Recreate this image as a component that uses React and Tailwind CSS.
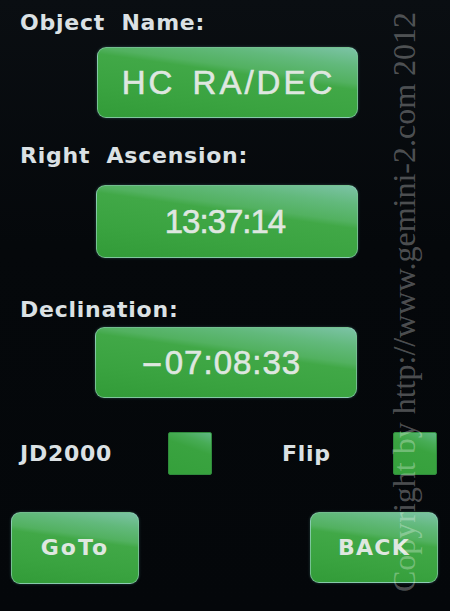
import React from "react";

const btnBg =
  "bg-[linear-gradient(188deg,#7cc3a6_0%,#62b97c_18%,#52b160_34%,#41a847_40%,#3aa340_70%,#329b38_100%)]";

function GreenButton({ className = "", textClass = "", children }) {
  return (
    <div
      className={`flex items-center justify-center rounded-[9px] border-[1.5px] border-[#9dd3c6]/60 ${btnBg} shadow-[0_0_3px_rgba(120,200,190,0.3)] ${className}`}
    >
      <span className={`text-[#dfe7e0] leading-none whitespace-nowrap ${textClass}`}>{children}</span>
    </div>
  );
}

function Check({ className = "" }) {
  return (
    <div
      className={`w-[44px] h-[43px] rounded-[2px] border border-[#2f8a3c] bg-[linear-gradient(200deg,#5fb884_0%,#47ac55_22%,#3aa340_40%,#35a03b_100%)] ${className}`}
    />
  );
}

const label =
  "font-['DejaVu_Sans',Verdana,sans-serif] font-bold text-[22px] leading-[22px] tracking-[0.75px] [word-spacing:8px] text-[#dbe1e4]";

const valueText = "text-[33px] [-webkit-text-stroke:0.6px_#dfe7e0]";

export default function App() {
  return (
    <div className="relative w-[450px] h-[611px] overflow-hidden bg-[linear-gradient(180deg,#0a0e12_0%,#05080b_40%,#04070a_100%)] font-['Liberation_Sans',Arial,sans-serif]">
      <div className="flex flex-col">
        <div className={`mt-[12px] ml-[20px] ${label}`}>Object Name:</div>
        <GreenButton
          className="mt-[13px] ml-[97px] w-[261px] h-[71px]"
          textClass={`${valueText} tracking-[3px] [word-spacing:5px] pl-[2px]`}
        >
          HC RA/DEC
        </GreenButton>

        <div className={`mt-[27px] ml-[20px] ${label}`}>Right Ascension:</div>
        <GreenButton
          className="mt-[18px] ml-[96px] w-[262px] h-[73px]"
          textClass={`${valueText} tracking-[-1px] pr-[4px]`}
        >
          13:37:14
        </GreenButton>

        <div className={`mt-[41px] ml-[20px] ${label}`}>Declination:</div>
        <GreenButton
          className="mt-[6px] ml-[95px] w-[262px] h-[71px]"
          textClass={`${valueText} tracking-[1px] pr-[4px]`}
        >
          <span className="inline-block scale-x-[2] mr-[6px]">-</span>07:08:33
        </GreenButton>

        <div className="mt-[34px] flex items-center h-[43px]">
          <span className={`ml-[20px] w-[148px] ${label}`}>JD2000</span>
          <Check />
          <span className={`ml-[70px] w-[111px] ${label}`}>Flip</span>
          <Check />
        </div>

        <div className="mt-[37px] flex">
          <GreenButton
            className="ml-[11px] w-[128px] h-[72px]"
            textClass="font-['DejaVu_Sans',Verdana,sans-serif] font-bold text-[22px] tracking-[2px]"
          >
            GoTo
          </GreenButton>
          <GreenButton
            className="ml-[171px] w-[128px] h-[71px]"
            textClass="font-['DejaVu_Sans',Verdana,sans-serif] font-bold text-[22px] tracking-[1.3px]"
          >
            BACK
          </GreenButton>
        </div>
      </div>

      <div className="absolute left-[404px] top-[302px] -translate-x-1/2 -translate-y-1/2 -rotate-90 whitespace-nowrap font-['Liberation_Serif','Times_New_Roman',serif] text-[32px] leading-none text-white/30">
        Copyright by http://www.gemini-2.com 2012
      </div>
    </div>
  );
}
